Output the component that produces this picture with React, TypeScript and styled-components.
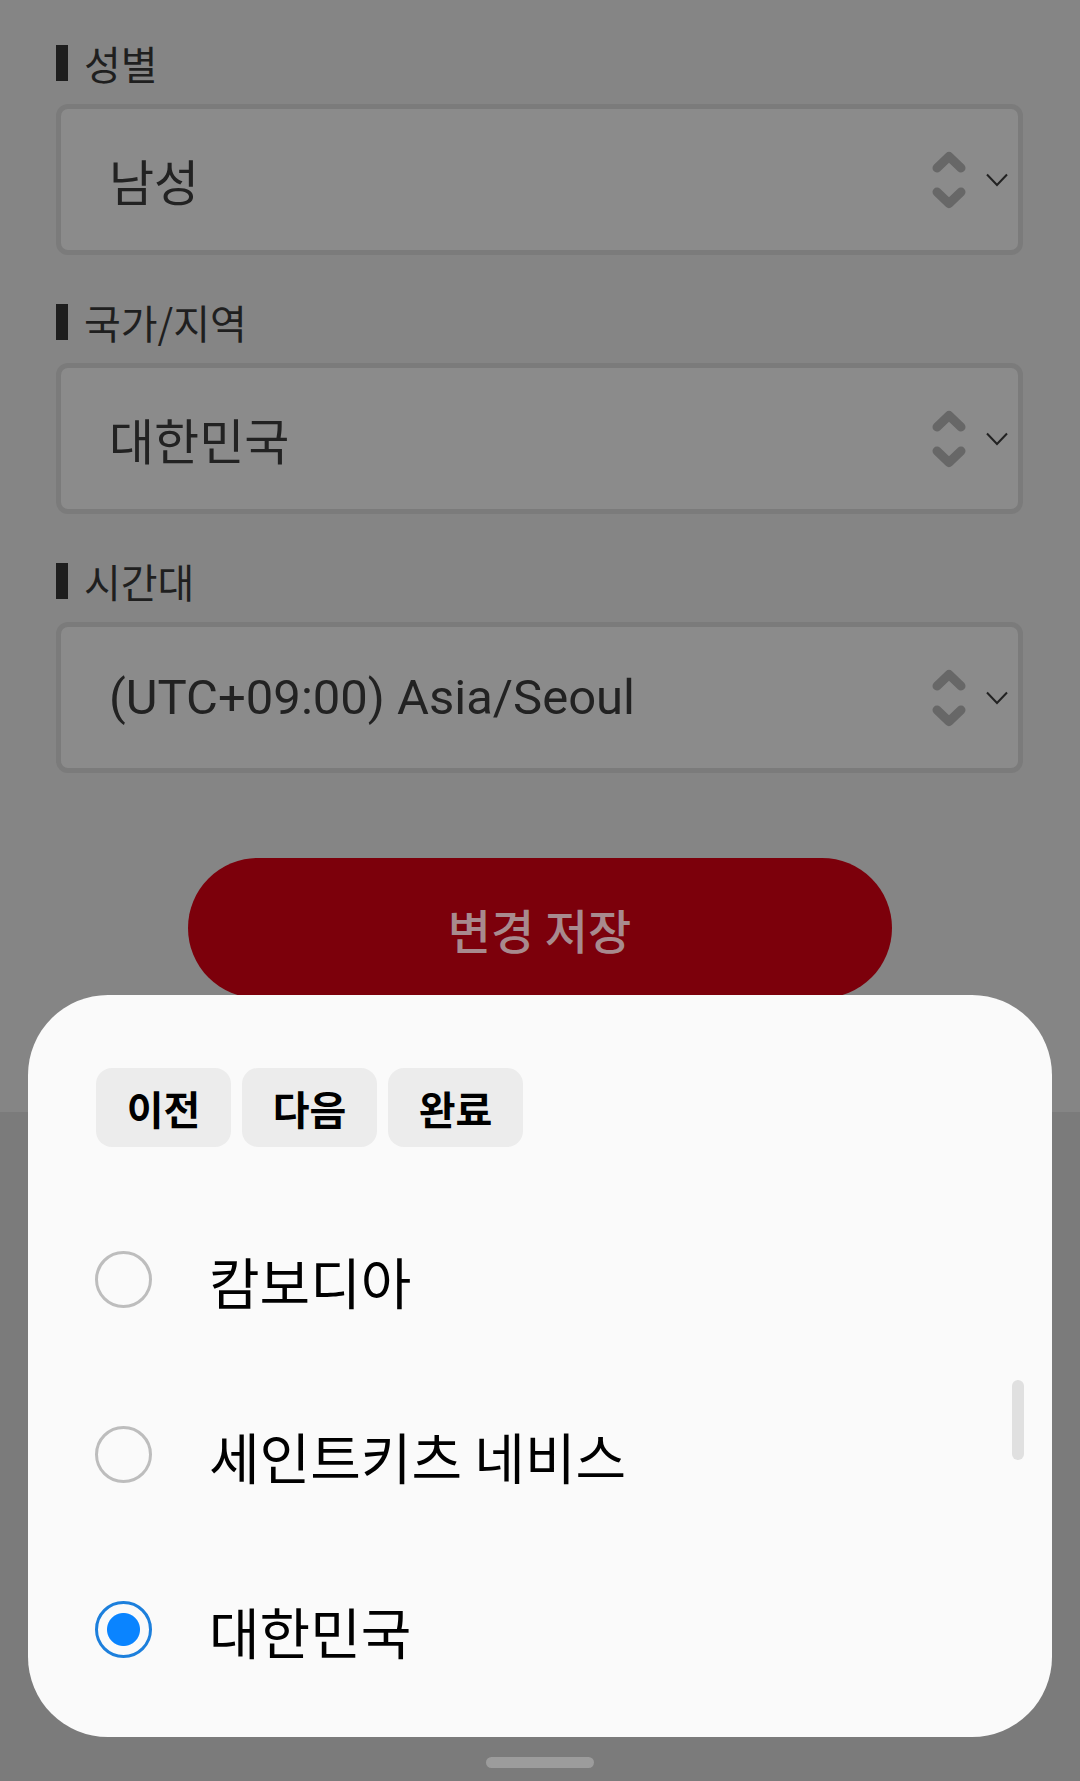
import styled, { createGlobalStyle } from "styled-components";

const GlobalStyle = createGlobalStyle`
  html, body {
    margin: 0;
    padding: 0;
    background: #858585;
  }
  * {
    box-sizing: border-box;
  }
`;

const fields = [
  { label: "성별", value: "남성" },
  { label: "국가/지역", value: "대한민국" },
  { label: "시간대", value: "(UTC+09:00) Asia/Seoul" },
];

const countries = [
  { name: "캄보디아", checked: false },
  { name: "세인트키츠 네비스", checked: false },
  { name: "대한민국", checked: true },
];

const UpDownIcon = () => (
  <svg width="34" height="58" viewBox="0 0 34 58">
    <polyline points="5,17 17,5.5 29,17" fill="none" stroke="#676767" strokeWidth="9" strokeLinecap="round" strokeLinejoin="round" />
    <polyline points="5,41 17,52.5 29,41" fill="none" stroke="#676767" strokeWidth="9" strokeLinecap="round" strokeLinejoin="round" />
  </svg>
);

const ChevronDown = () => (
  <svg width="22" height="14" viewBox="0 0 22 14">
    <polyline points="1,1.5 11,12 21,1.5" fill="none" stroke="#222" strokeWidth="2" />
  </svg>
);

const App = () => {
  return (
    <>
      <GlobalStyle />
      <Screen>
        <Page>
          <Form>
            {fields.map((f) => (
              <Field key={f.label}>
                <Label>
                  <LabelBar />
                  {f.label}
                </Label>
                <Select>
                  <SelectValue>{f.value}</SelectValue>
                  <Icons>
                    <UpDownIcon />
                    <ChevronDown />
                  </Icons>
                </Select>
              </Field>
            ))}
          </Form>
          <SaveButton>변경 저장</SaveButton>
        </Page>
        <BottomArea>
          <HomeIndicator />
        </BottomArea>

        <Sheet>
          <Toolbar>
            <ToolButton>이전</ToolButton>
            <ToolButton>다음</ToolButton>
            <ToolButton>완료</ToolButton>
          </Toolbar>
          <OptionList>
            {countries.map((c) => (
              <Option key={c.name}>
                <Radio checked={c.checked} />
                <OptionText>{c.name}</OptionText>
              </Option>
            ))}
          </OptionList>
          <ScrollThumb />
        </Sheet>
      </Screen>
    </>
  );
};

export default App;

const Screen = styled.div`
  position: relative;
  width: 1080px;
  height: 1781px;
  display: flex;
  flex-direction: column;
  overflow: hidden;
  font-family: "Noto Sans CJK KR", "Noto Sans", sans-serif;
`;

const Page = styled.div`
  height: 1112px;
  background: #858585;
  padding: 41px 57px 0 56px;
  display: flex;
  flex-direction: column;
  align-items: center;
`;

const Form = styled.div`
  width: 100%;
  display: flex;
  flex-direction: column;
  gap: 45px;
`;

const Field = styled.div`
  display: flex;
  flex-direction: column;
  gap: 19px;
`;

const Label = styled.div`
  height: 44px;
  display: flex;
  align-items: center;
  gap: 16px;
  color: #1f1f1f;
  font-size: 40px;
`;

const LabelBar = styled.span`
  width: 12px;
  height: 36px;
  background: #1e1e1e;
`;

const Select = styled.div`
  height: 151px;
  display: flex;
  align-items: center;
  justify-content: space-between;
  padding: 0 10px 0 48px;
  background: #8b8b8b;
  border: 5px solid #7b7b7b;
  border-radius: 12px;
`;

const SelectValue = styled.span`
  color: #222;
  font-size: 49px;
  font-family: "Roboto", "Noto Sans CJK KR", sans-serif;
`;

const Icons = styled.div`
  display: flex;
  align-items: center;
  gap: 20px;
`;

const SaveButton = styled.div`
  margin-top: 85px;
  width: 704px;
  height: 140px;
  border-radius: 70px;
  background: #7c000b;
  color: #a88a8e;
  font-size: 47px;
  font-weight: 500;
  display: flex;
  align-items: center;
  justify-content: center;
`;

const BottomArea = styled.div`
  flex: 1;
  background: #7b7b7b;
  display: flex;
  justify-content: center;
  align-items: flex-end;
  padding-bottom: 13px;
`;

const HomeIndicator = styled.div`
  width: 108px;
  height: 11px;
  border-radius: 6px;
  background: #9c9c9c;
`;

const Sheet = styled.div`
  position: absolute;
  left: 28px;
  top: 995px;
  width: 1024px;
  height: 742px;
  background: #fafafa;
  border-radius: 80px;
  padding: 73px 0 0 67px;
`;

const Toolbar = styled.div`
  display: flex;
  gap: 11px;
  padding-left: 1px;
`;

const ToolButton = styled.div`
  width: 135px;
  height: 79px;
  border-radius: 16px;
  background: #ececec;
  color: #000;
  font-size: 40px;
  font-weight: 700;
  display: flex;
  align-items: center;
  justify-content: center;
`;

const OptionList = styled.div`
  margin-top: 45px;
  display: flex;
  flex-direction: column;
`;

const Option = styled.div`
  height: 175px;
  display: flex;
  align-items: center;
  gap: 57px;
`;

const Radio = styled.span<{ checked: boolean }>`
  width: 57px;
  height: 57px;
  border-radius: 50%;
  border: 3px solid ${(p) => (p.checked ? "#1c7fdc" : "#bdbdbd")};
  background: ${(p) =>
    p.checked ? "radial-gradient(circle, #0a84ff 0 16px, transparent 17px)" : "transparent"};
  flex-shrink: 0;
`;

const OptionText = styled.span`
  color: #000;
  font-size: 55px;
`;

const ScrollThumb = styled.div`
  position: absolute;
  right: 28px;
  top: 385px;
  width: 12px;
  height: 80px;
  border-radius: 6px;
  background: #e0e0e0;
`;
